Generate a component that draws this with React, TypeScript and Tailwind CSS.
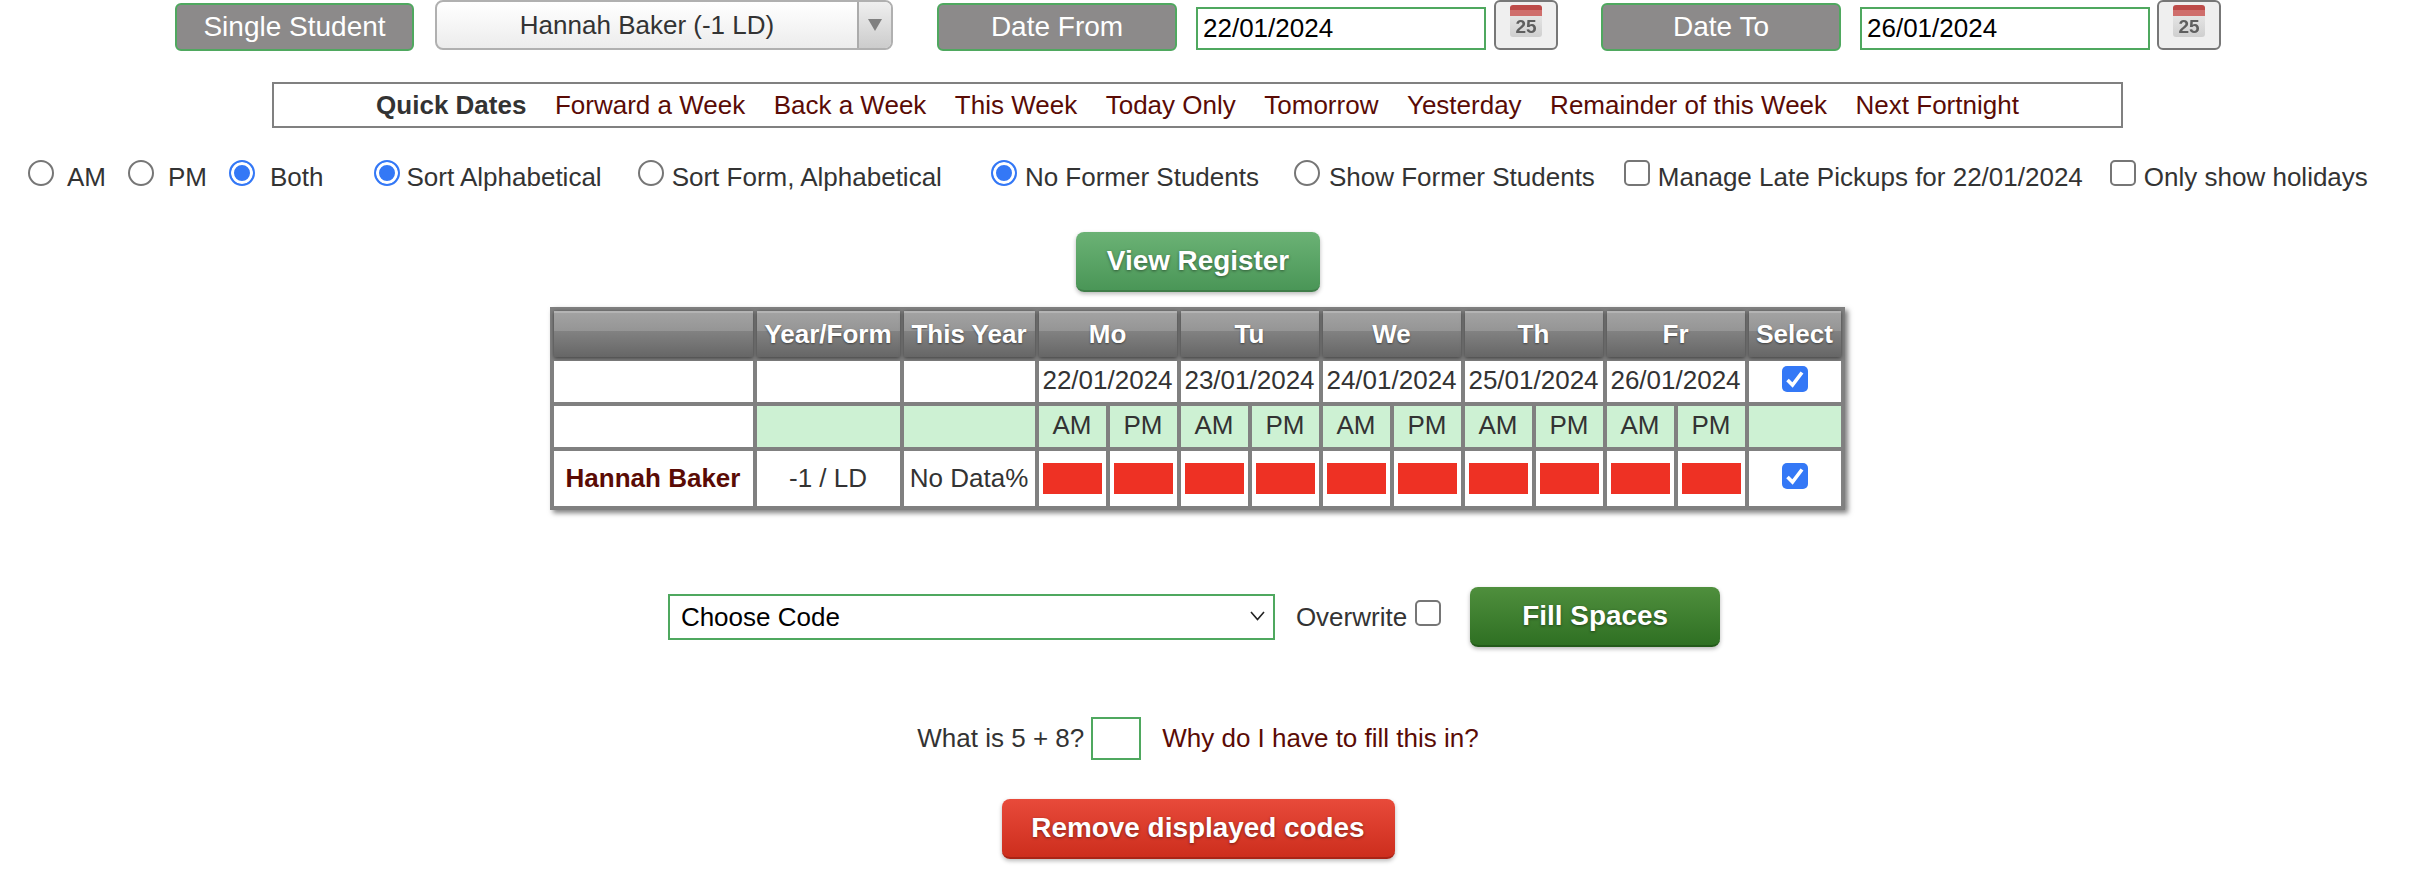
import React from "react";

const days = ["Mo", "Tu", "We", "Th", "Fr"];
const dates = ["22/01/2024", "23/01/2024", "24/01/2024", "25/01/2024", "26/01/2024"];
const th =
  "p-0 font-bold text-white text-center align-middle shadow-[0_1px_4px_rgba(0,0,0,0.55)] [text-shadow:0_1px_2px_rgba(0,0,0,0.45)] bg-[linear-gradient(#b4b4b4_0,#b4b4b4_2px,#a2a2a2_2px,#959595_20px,#828282_20px,#666666_100%)]";

function Label({ children, w }: { children: React.ReactNode; w: string }) {
  return (
    <div className={"flex h-[48px] mt-[3px] items-center justify-center rounded-[6px] border-2 border-[#4fa85f] bg-[#8c8a8a] text-[28px] text-white " + w}>
      {children}
    </div>
  );
}

function Calendar() {
  return (
    <button className="flex h-[50px] w-[64px] shrink-0 items-start justify-center rounded-[6px] border-2 border-[#777777] bg-[#efefef] pt-[3px]">
      <svg className="blur-[0.5px]" width="32" height="32" viewBox="0 0 32 32">
        <defs>
          <linearGradient id="calBody" x1="0" y1="0" x2="0" y2="1">
            <stop offset="0" stopColor="#efefef" />
            <stop offset="1" stopColor="#cfcfcf" />
          </linearGradient>
        </defs>
        <rect x="0" y="0" width="32" height="32" rx="3" fill="url(#calBody)" />
        <path d="M0 3a3 3 0 0 1 3-3h26a3 3 0 0 1 3 3v8H0z" fill="#bd4b49" />
        <rect x="0" y="5" width="32" height="6" fill="#cf6e6c" />
        <text x="16" y="28" textAnchor="middle" fontSize="19" fontWeight="700" fill="#5f5f5f" fontFamily="Liberation Sans">25</text>
      </svg>
    </button>
  );
}

function Radio({ checked, name, label, labelGap, ml }: { checked?: boolean; name: string; label: string; labelGap: string; ml: string }) {
  return (
    <label className={"flex items-start " + ml + " " + labelGap}>
      <input
        type="radio"
        name={name}
        defaultChecked={checked}
        className="h-[26px] w-[26px] shrink-0 appearance-none rounded-full border-2 border-[#767676] bg-white checked:border-[#3478f6] checked:bg-[#3478f6] checked:shadow-[inset_0_0_0_3px_#ffffff]"
      />
      <span className="leading-[34px] whitespace-nowrap">{label}</span>
    </label>
  );
}

function Tick() {
  return (
    <span className="relative mx-auto block h-[26px] w-[26px]">
      <input type="checkbox" defaultChecked className="block h-[26px] w-[26px] appearance-none rounded-[5px] bg-[#3478f6]" />
      <svg className="pointer-events-none absolute left-0 top-0" width="26" height="26" viewBox="0 0 26 26">
        <path d="M5.5 14l5 5 9.5-12.5" fill="none" stroke="#ffffff" strokeWidth="3.6" />
      </svg>
    </span>
  );
}

function Box({ className = "" }: { className?: string }) {
  return <input type="checkbox" className={"block h-[26px] w-[26px] shrink-0 appearance-none rounded-[5px] border-2 border-[#767676] bg-white " + className} />;
}

function Link({ children }: { children: React.ReactNode }) {
  return <a className="cursor-pointer text-[#5a0b05] whitespace-nowrap">{children}</a>;
}

const glossBtn = "flex h-[60px] items-center justify-center rounded-[8px] font-bold text-white text-[27.9px] shadow-[0_2px_4px_rgba(0,0,0,0.28)] [text-shadow:0_1px_3px_rgba(0,0,0,0.45)] ";

export default function App() {
  return (
    <div className="h-[886px] w-[2396px] overflow-hidden bg-white font-['Liberation_Sans',Arial,sans-serif] text-[26px] text-[#333333]">
      <div className="flex h-[51px] pl-[175px]">
        <Label w="w-[239px]">Single Student</Label>
        <div className="ml-[21px] flex h-[50px] w-[458px] overflow-hidden rounded-[8px] border-2 border-[#b0b0b0] bg-[linear-gradient(#ffffff,#ececec)]">
          <div className="flex flex-1 items-center justify-center pt-[1px]">Hannah Baker (-1 LD)</div>
          <div className="flex w-[34px] items-center justify-center border-l-2 border-[#ababab] bg-[linear-gradient(#efefef,#cccccc)]">
            <svg width="14" height="14" viewBox="0 0 14 14">
              <path d="M0 1h14L7 13z" fill="#808080" />
            </svg>
          </div>
        </div>
        <div className="ml-[44px]">
          <Label w="w-[240px]">Date From</Label>
        </div>
        <input defaultValue="22/01/2024" className="ml-[19px] mt-[7px] h-[43px] w-[290px] border-2 border-[#4fa85f] bg-white pl-[5px] text-black outline-none" />
        <div className="ml-[8px]">
          <Calendar />
        </div>
        <div className="ml-[43px]">
          <Label w="w-[240px]">Date To</Label>
        </div>
        <input defaultValue="26/01/2024" className="ml-[19px] mt-[7px] h-[43px] w-[290px] border-2 border-[#4fa85f] bg-white pl-[5px] text-black outline-none" />
        <div className="ml-[7px]">
          <Calendar />
        </div>
      </div>

      <div className="ml-[272px] mt-[31px] flex h-[46px] w-[1851px] items-center justify-center gap-[28.5px] border-2 border-[#808080]">
        <b className="whitespace-nowrap">Quick Dates</b>
        <Link>Forward a Week</Link>
        <Link>Back a Week</Link>
        <Link>This Week</Link>
        <Link>Today Only</Link>
        <Link>Tomorrow</Link>
        <Link>Yesterday</Link>
        <Link>Remainder of this Week</Link>
        <Link>Next Fortnight</Link>
      </div>

      <div className="mt-[32px] flex h-[26px] pl-[28px]">
        <Radio name="ap" label="AM" ml="" labelGap="gap-[13px]" />
        <Radio name="ap" label="PM" ml="ml-[22px]" labelGap="gap-[14px]" />
        <Radio name="ap" checked label="Both" ml="ml-[22px]" labelGap="gap-[15px]" />
        <Radio name="sort" checked label="Sort Alphabetical" ml="ml-[50px]" labelGap="gap-[7px]" />
        <Radio name="sort" label="Sort Form, Alphabetical" ml="ml-[36px]" labelGap="gap-[8px]" />
        <Radio name="former" checked label="No Former Students" ml="ml-[49px]" labelGap="gap-[8px]" />
        <Radio name="former" label="Show Former Students" ml="ml-[35px]" labelGap="gap-[9px]" />
        <label className="ml-[29px] flex items-start gap-[8px]">
          <Box />
          <span className="leading-[34px] whitespace-nowrap">Manage Late Pickups for 22/01/2024</span>
        </label>
        <label className="ml-[27px] flex items-start gap-[8px]">
          <Box />
          <span className="leading-[34px] whitespace-nowrap">Only show holidays</span>
        </label>
      </div>

      <div className="mt-[46px] flex justify-center">
        <button className={glossBtn + "w-[244px] border-b-2 border-[#3f7d49] bg-[linear-gradient(#6bb275,#4a9657)]"}>View Register</button>
      </div>

      <div className="mt-[15px] flex justify-center pr-[2px]">
        <table className="table-fixed border-separate border-spacing-[4px] bg-[#808080] shadow-[3px_3px_5px_rgba(0,0,0,0.5)]">
          <colgroup>
            <col className="w-[199px]" />
            <col className="w-[143px]" />
            <col className="w-[131px]" />
            {Array.from({ length: 10 }).map((_, i) => (
              <col key={i} className="w-[67px]" />
            ))}
            <col className="w-[92px]" />
          </colgroup>
          <tbody>
            <tr className="h-[46px]">
              <th className={th}></th>
              <th className={th}>Year/Form</th>
              <th className={th}>This Year</th>
              {days.map((d) => (
                <th key={d} colSpan={2} className={th}>{d}</th>
              ))}
              <th className={th}>Select</th>
            </tr>
            <tr className="h-[41px] text-center">
              <td className="bg-white p-0"></td>
              <td className="bg-white p-0"></td>
              <td className="bg-white p-0"></td>
              {dates.map((d) => (
                <td key={d} colSpan={2} className="bg-white p-0 pb-[2px] whitespace-nowrap">{d}</td>
              ))}
              <td className="bg-white p-0 align-top pt-[5px]">
                <Tick />
              </td>
            </tr>
            <tr className="h-[39px] text-center">
              <td className="bg-white p-0"></td>
              <td className="bg-[#cdf1d3] p-0"></td>
              <td className="bg-[#cdf1d3] p-0"></td>
              {Array.from({ length: 10 }).map((_, i) => (
                <td key={i} className="bg-[#cdf1d3] p-0 pb-[2px]">{i % 2 === 0 ? "AM" : "PM"}</td>
              ))}
              <td className="bg-[#cdf1d3] p-0"></td>
            </tr>
            <tr className="h-[55px] text-center">
              <td className="bg-white p-0 font-bold text-[#5a0b05] whitespace-nowrap">Hannah Baker</td>
              <td className="bg-white p-0">-1 / LD</td>
              <td className="bg-white p-0 whitespace-nowrap">No Data%</td>
              {Array.from({ length: 10 }).map((_, i) => (
                <td key={i} className="bg-white p-0 align-middle">
                  <div className="mx-auto h-[31px] w-[59px] bg-[#ee3124]"></div>
                </td>
              ))}
              <td className="bg-white p-0 align-top pt-[12px]">
                <Tick />
              </td>
            </tr>
          </tbody>
        </table>
      </div>

      <div className="mt-[77px] flex justify-center pr-[8px]">
        <div className="relative mt-[7px] h-[46px] w-[607px]">
          <select className="h-full w-full appearance-none border-2 border-[#4fa85f] bg-white pl-[11px] text-black outline-none">
            <option>Choose Code</option>
          </select>
          <svg className="pointer-events-none absolute right-[10px] top-[17px]" width="15" height="10" viewBox="0 0 15 10">
            <path d="M1 1l6.5 7.5L14 1" fill="none" stroke="#222222" strokeWidth="1.6" />
          </svg>
        </div>
        <span className="ml-[21px] flex h-[60px] items-center">Overwrite</span>
        <Box className="ml-[8px] mt-[13px]" />
        <button className={glossBtn + "ml-[29px] w-[250px] border-b-2 border-[#235a1a] bg-[linear-gradient(#4f8f3d,#2f7023)]"}>Fill Spaces</button>
      </div>

      <div className="mt-[70px] flex h-[43px] items-center justify-center">
        <span>What is 5 + 8?</span>
        <input className="ml-[7px] h-[43px] w-[50px] border-2 border-[#4fa85f] bg-white outline-none" />
        <span className="ml-[21px]">
          <Link>Why do I have to fill this in?</Link>
        </span>
      </div>

      <div className="mt-[39px] flex justify-center">
        <button className={glossBtn + "w-[393px] border-b-2 border-[#a82416] bg-[linear-gradient(#e84a3a,#cd2e1d)]"}>Remove displayed codes</button>
      </div>
    </div>
  );
}
